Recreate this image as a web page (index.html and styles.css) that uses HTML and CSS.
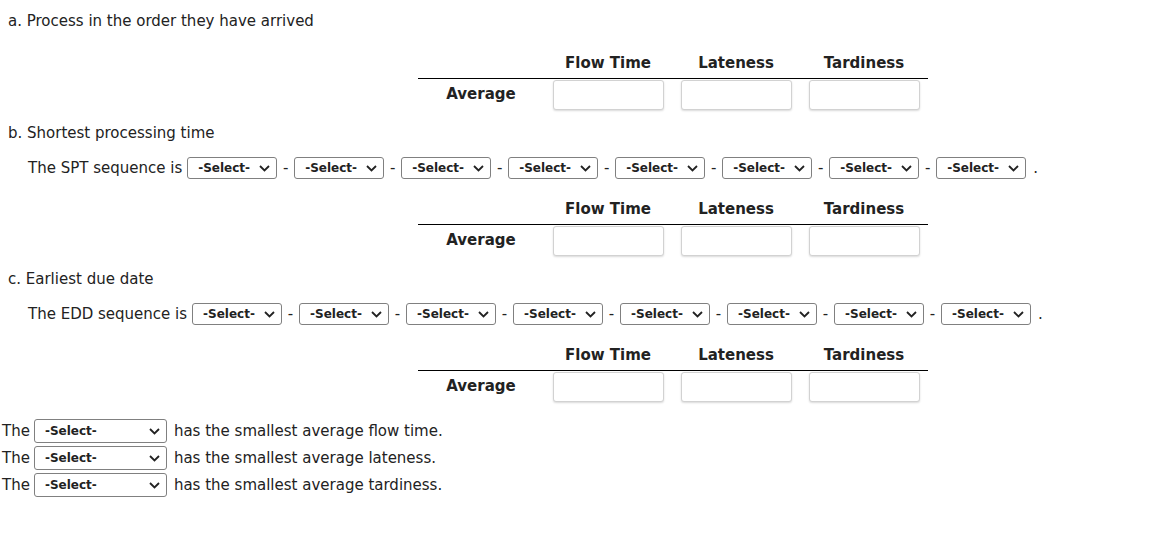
FILE: index.html
```html
<!DOCTYPE html>
<html lang="en">
<head>
  <meta charset="UTF-8">
  <meta name="viewport" content="width=device-width, initial-scale=1.0">
  <title>Job Sequencing Rules</title>
  <link rel="stylesheet" href="styles.css">
</head>
<body>
  <div class="sheet">

    <!-- a. first come first served -->
    <p class="part-title">a. Process in the order they have arrived</p>
    <table class="avg">
      <thead>
        <tr><th></th><th>Flow Time</th><th>Lateness</th><th>Tardiness</th></tr>
      </thead>
      <tbody>
        <tr>
          <th class="row-head">Average</th>
          <td><input type="text" id="fcfs-flow"></td>
          <td><input type="text" id="fcfs-late"></td>
          <td><input type="text" id="fcfs-tardy"></td>
        </tr>
      </tbody>
    </table>

    <!-- b. shortest processing time -->
    <p class="part-title">b. Shortest processing time</p>
    <div class="seq" id="spt-seq">
      <span class="seq-label">The SPT sequence is</span>
    </div>
    <table class="avg">
      <thead>
        <tr><th></th><th>Flow Time</th><th>Lateness</th><th>Tardiness</th></tr>
      </thead>
      <tbody>
        <tr>
          <th class="row-head">Average</th>
          <td><input type="text" id="spt-flow"></td>
          <td><input type="text" id="spt-late"></td>
          <td><input type="text" id="spt-tardy"></td>
        </tr>
      </tbody>
    </table>

    <!-- c. earliest due date -->
    <p class="part-title">c. Earliest due date</p>
    <div class="seq" id="edd-seq">
      <span class="seq-label">The EDD sequence is</span>
    </div>
    <table class="avg">
      <thead>
        <tr><th></th><th>Flow Time</th><th>Lateness</th><th>Tardiness</th></tr>
      </thead>
      <tbody>
        <tr>
          <th class="row-head">Average</th>
          <td><input type="text" id="edd-flow"></td>
          <td><input type="text" id="edd-late"></td>
          <td><input type="text" id="edd-tardy"></td>
        </tr>
      </tbody>
    </table>

    <!-- which rule wins -->
    <div class="verdict">
      <div class="verdict-row">
        <span>The</span>
        <span class="pick pick-wide">
          <select><option>-Select-</option><option>FCFS</option><option>SPT</option><option>EDD</option></select>
          <svg viewBox="0 0 11 7" width="11" height="7"><polyline points="1,1 5.5,5.5 10,1"/></svg>
        </span>
        <span>has the smallest average flow time.</span>
      </div>
      <div class="verdict-row">
        <span>The</span>
        <span class="pick pick-wide">
          <select><option>-Select-</option><option>FCFS</option><option>SPT</option><option>EDD</option></select>
          <svg viewBox="0 0 11 7" width="11" height="7"><polyline points="1,1 5.5,5.5 10,1"/></svg>
        </span>
        <span>has the smallest average lateness.</span>
      </div>
      <div class="verdict-row">
        <span>The</span>
        <span class="pick pick-wide">
          <select><option>-Select-</option><option>FCFS</option><option>SPT</option><option>EDD</option></select>
          <svg viewBox="0 0 11 7" width="11" height="7"><polyline points="1,1 5.5,5.5 10,1"/></svg>
        </span>
        <span>has the smallest average tardiness.</span>
      </div>
    </div>
  </div>

  <script>
    const JOBS = ['A', 'B', 'C', 'D', 'E', 'F', 'G', 'H'];

    // eight job pickers joined by dashes, closed with a period
    function buildSequence(id) {
      const row = document.getElementById(id);
      JOBS.forEach((job, i) => {
        if (i > 0) {
          const dash = document.createElement('span');
          dash.className = 'dash';
          dash.textContent = '-';
          row.appendChild(dash);
        }
        const pick = document.createElement('span');
        pick.className = 'pick';
        pick.innerHTML = '<select><option>-Select-</option>' +
          JOBS.map(j => `<option>${j}</option>`).join('') +
          '</select><svg viewBox="0 0 11 7" width="11" height="7"><polyline points="1,1 5.5,5.5 10,1"/></svg>';
        row.appendChild(pick);
      });
      const end = document.createElement('span');
      end.className = 'seq-end';
      end.textContent = '.';
      row.appendChild(end);
    }

    buildSequence('spt-seq');
    buildSequence('edd-seq');
  </script>
</body>
</html>
```

FILE: styles.css
```css
body {
  margin: 0;
  font-family: "DejaVu Sans", Verdana, sans-serif;
  font-size: 15px;
  line-height: 18px;
  color: #222;
  background: #fff;
}
.sheet {
  padding-top: 12px;
}
.part-title {
  margin: 14px 0 0 8px;
}
.part-title:first-child {
  margin-top: 0;
}
.avg {
  border-collapse: collapse;
  table-layout: fixed;
  width: 510px;
  margin: 20px 0 0 418px;
}
.avg + .part-title {
  margin-top: 14px;
}
.seq + .avg {
  margin-top: 16px;
}
.avg th {
  font-weight: bold;
  text-align: center;
}
.avg thead th {
  padding: 4px 0 6px;
  border-bottom: 1px solid #000;
}
.avg thead th:first-child {
  width: 126px;
}
.avg td {
  padding: 0;
}
.avg .row-head {
  padding-bottom: 2px;
}
.avg input {
  display: block;
  box-sizing: border-box;
  width: 111px;
  height: 30px;
  margin: 1px auto 0;
  border: 1px solid #d2d2d2;
  border-radius: 3px;
  box-shadow: 0 1px 2px rgba(0,0,0,0.15);
  font: inherit;
}
.seq {
  display: flex;
  align-items: center;
  height: 24px;
  margin: 14px 0 0 28px;
}
.seq-label {
  margin-right: 5px;
}
.dash {
  width: 17px;
  text-align: center;
}
.seq-end {
  margin-left: 7px;
}
.pick {
  position: relative;
  display: inline-block;
}
.pick select {
  appearance: none;
  -webkit-appearance: none;
  box-sizing: border-box;
  width: 90px;
  height: 22px;
  padding: 0 0 0 10px;
  border: 1px solid #808080;
  border-radius: 3px;
  background: #fff;
  color: #222;
  font-family: "DejaVu Sans", Verdana, sans-serif;
  font-size: 12px;
  font-weight: bold;
  display: block;
}
.pick svg {
  position: absolute;
  right: 7px;
  top: 50%;
  margin-top: -3px;
  pointer-events: none;
  fill: none;
  stroke: #222;
  stroke-width: 1.8;
}
.pick-wide select {
  width: 133px;
  height: 24px;
}
.verdict {
  margin: 15px 0 0 2px;
}
.verdict-row {
  display: flex;
  align-items: center;
  height: 27px;
}
.verdict-row .pick {
  margin: 0 7px 0 4px;
}
```
